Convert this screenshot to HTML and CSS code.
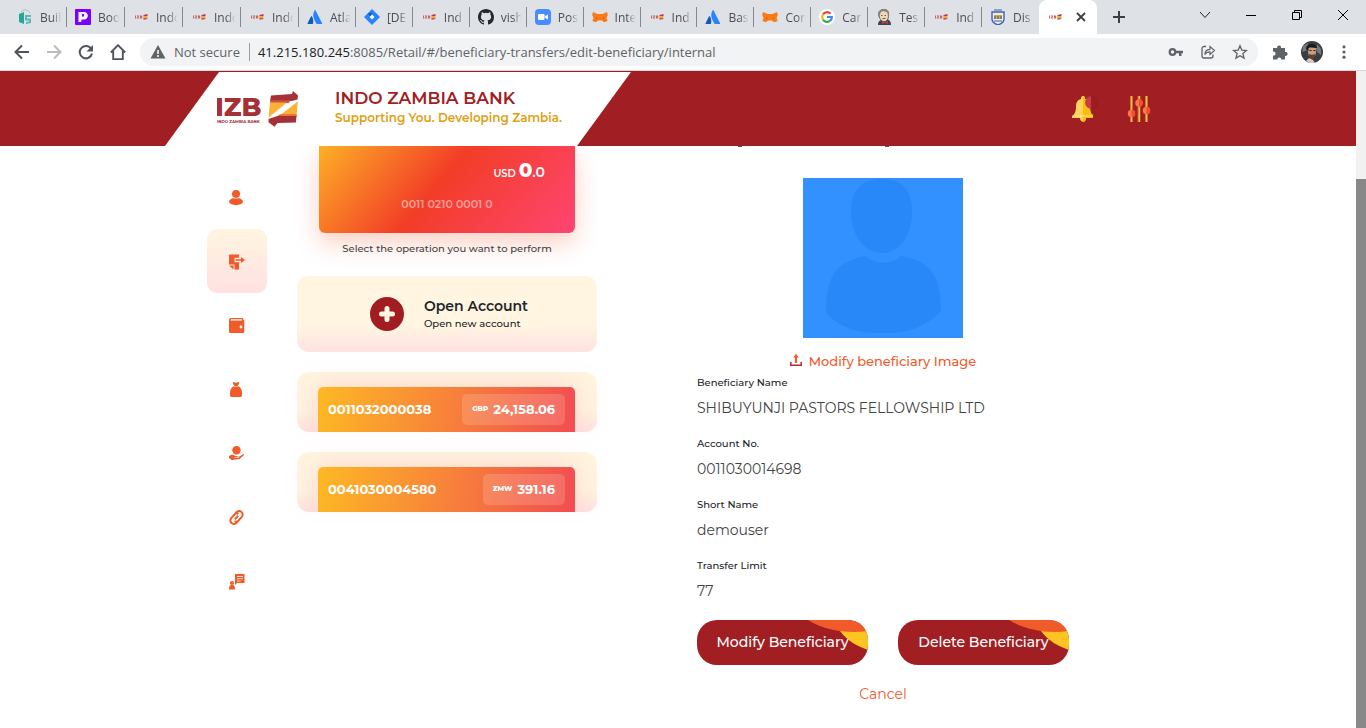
FILE: index.html
```html
<!DOCTYPE html>
<html lang="en">
<head>
<meta charset="utf-8">
<meta name="viewport" content="width=device-width, initial-scale=1">
<title>Indo Zambia Bank</title>
<link rel="stylesheet" href="styles.css">
</head>
<body>
<svg class="defs" aria-hidden="true">
  <symbol id="f-izb" viewBox="0 0 16 16"><path d="M2 6.500h1v3H2zM3.700 6.500h2.600v.8L5 8.700h1.300v.8H3.700v-.8l1.300-1.400H3.700zM7 6.500h1.800l.6.700-.4.800.4.800-.6.700H7z" fill="#c0686a"/><path d="M10.500 6l4-1v2h-4z" fill="#b83a3e"/><path d="M10.300 7h4.200l-.3 2.500h-3.900z" fill="#f7a535"/><path d="M10.300 9.200h4V10l-3.600.8z" fill="#b83a3e"/></symbol>
  <symbol id="f-atl" viewBox="0 0 16 16"><path d="M5 7.500C4.500 7 4.100 7.100 3.900 7.600L.6 14.200c-.2.400 0 .8.500.8h4.700c.8-1.800.7-4.900-.8-7.500z" fill="#1558bc"/><path d="M7.700 1.300c-2 3.200-1.800 6.500-.5 9.200l2.100 4.100c.1.300.3.400.6.400h4.700c.5 0 .7-.4.500-.8L8.600 1.400c-.2-.5-.6-.5-.9-.1z" fill="#2684ff"/></symbol>
  <symbol id="f-fox" viewBox="0 0 16 16"><path d="M1 3l4.500 2h5L15 3l.8 3-1.300 3 1.200 3-3.700 1.300-2-1.800H6l-2 1.800L.3 12l1.200-3L.2 6z" fill="#f97a16"/><path d="M4 8.500l2 1-2 .3zM12 8.500l-2 1 2 .3z" fill="#b5540c"/></symbol>
</svg>
<header class="browser">
  <div class="strip">
    <nav class="tabs" aria-label="Open tabs">
      <a class="tab" href="#"><svg viewBox="0 0 16 16"><path d="M2 5l5-2v12l-5-2z" fill="#26a69a"/><path d="M8 6h6v2h-4v1.500h4V14l-5 1v-2l3-.6v-1H8z" fill="#5bb9af"/><path d="M4 3c2-3 7-3 9 1" fill="none" stroke="#9cc9c4"/></svg><span>Buil</span></a>
      <a class="tab" href="#"><svg viewBox="0 0 16 16"><rect width="16" height="16" rx="1" fill="#7b00ff"/><path d="M3.500 3h5.500c5 0 5 7.500 0 7.500H6.300V13H3.500z" fill="#fff"/><path d="M8 5.200c1-1 2.300.5 0 3-2.300-2.500-1-4 0-3z" fill="#7b00ff"/></svg><span>Boo</span></a>
      <a class="tab" href="#"><svg><use href="#f-izb"/></svg><span>Indo</span></a>
      <a class="tab" href="#"><svg><use href="#f-izb"/></svg><span>Indo</span></a>
      <a class="tab" href="#"><svg><use href="#f-izb"/></svg><span>Indo</span></a>
      <a class="tab" href="#"><svg><use href="#f-atl"/></svg><span>Atla</span></a>
      <a class="tab" href="#"><svg viewBox="0 0 16 16"><path d="M8 0l8 8-8 8-8-8z" fill="#2684ff"/><path d="M8 4v2.500L6 8 4 4z" fill="#1558bc"/><path d="M8 5.500L10.500 8 8 10.500 5.500 8z" fill="#fff"/></svg><span>[DE</span></a>
      <a class="tab" href="#"><svg><use href="#f-izb"/></svg><span>Ind</span></a>
      <a class="tab" href="#"><svg viewBox="0 0 16 16"><path fill="#24292f" d="M8 0C3.580 0 0 3.580 0 8c0 3.540 2.290 6.530 5.470 7.590.4.070.55-.17.55-.38 0-.19-.01-.82-.01-1.490-2.010.37-2.530-.49-2.690-.94-.09-.23-.48-.94-.82-1.130-.28-.15-.68-.52-.01-.53.63-.01 1.080.58 1.230.82.72 1.210 1.870.87 2.330.66.070-.52.28-.87.51-1.070-1.780-.2-3.640-.89-3.640-3.950 0-.87.31-1.590.82-2.150-.08-.2-.36-1.020.08-2.120 0 0 .67-.21 2.200.82a7.600 7.600 0 014 0c1.530-1.040 2.200-.82 2.200-.82.44 1.100.16 1.920.08 2.120.51.56.82 1.270.82 2.150 0 3.070-1.870 3.750-3.650 3.950.29.25.54.73.54 1.480 0 1.070-.01 1.930-.01 2.200 0 .21.15.46.55.38A8.010 8.010 0 0016 8c0-4.420-3.580-8-8-8z"/></svg><span>vish</span></a>
      <a class="tab" href="#"><svg viewBox="0 0 16 16"><rect width="16" height="16" rx="4" fill="#4a8cff"/><rect x="3" y="5" width="6.500" height="6" rx="1.300" fill="#fff"/><path d="M10 7.300L13 5.500v5L10 8.700z" fill="#fff"/></svg><span>Pos</span></a>
      <a class="tab" href="#"><svg><use href="#f-fox"/></svg><span>Inte</span></a>
      <a class="tab" href="#"><svg><use href="#f-izb"/></svg><span>Ind</span></a>
      <a class="tab" href="#"><svg><use href="#f-atl"/></svg><span>Bas</span></a>
      <a class="tab" href="#"><svg><use href="#f-fox"/></svg><span>Con</span></a>
      <a class="tab" href="#"><svg viewBox="0 0 16 16"><circle cx="8" cy="8" r="8" fill="#fff"/><g fill="none" stroke-width="2.200"><path d="M11.500 4.700A4.800 4.800 0 004 5.400" stroke="#ea4335"/><path d="M4 5.400a5 5 0 000 5.200" stroke="#fbbc05"/><path d="M4 10.600a4.800 4.800 0 007.200 1.100" stroke="#34a853"/><path d="M11.200 11.700A4.700 4.700 0 0012.800 8H8" stroke="#4285f4"/></g></svg><span>Car</span></a>
      <a class="tab" href="#"><svg viewBox="0 0 16 16"><path d="M2 16c0-3 1-4 3-5l6-1c2 1 4 2 4 6z" fill="#37474f"/><path d="M3 5c0-6 9-6 9.500-1 .5 5-1 8.500-4 8.500S3 10 3 5z" fill="#f0d6b7" stroke="#4e423b" stroke-width=".8"/><path d="M2.500 8C0 1 7-1.500 11.500 1.500c2.500 2 1.500 5 .7 6.500-.8-2 0-4-1.700-5C8 2 5 2 4.500 4z" fill="#8b817b"/><path d="M6 12l3 1.300L12 12v3l-3-1-3 1z" fill="#d33833"/><path d="M5 6.500h1.500M8.500 6.500H10M6.500 9.500h3" stroke="#4e423b" stroke-width=".8"/></svg><span>Tes</span></a>
      <a class="tab" href="#"><svg><use href="#f-izb"/></svg><span>Ind</span></a>
      <a class="tab" href="#"><svg viewBox="0 0 16 16"><path d="M2 3h12v7c0 3-3 5-6 6-3-1-6-3-6-6z" fill="#e8edf5" stroke="#3f62ae" stroke-width="1.400"/><path d="M4 6h8v4H4z" fill="#d9a62c"/><path d="M4 1h8M5 7v3M8 7v3M11 7v3M4 12h8" stroke="#3f62ae" stroke-width="1.100"/></svg><span>Dis</span></a>
    </nav>
    <div class="tab-active"><svg><use href="#f-izb"/></svg><button class="close" aria-label="Close tab"><svg viewBox="0 0 16 16"><path d="M4 4l8 8M12 4l-8 8" stroke="#3c4043" stroke-width="1.800"/></svg></button></div>
    <button class="newtab" aria-label="New tab"><svg viewBox="0 0 16 16"><path d="M8 2v12M2 8h12" stroke="#3c4043" stroke-width="2"/></svg></button>
    <div class="window">
      <button aria-label="Search tabs"><svg viewBox="0 0 16 16"><path d="M3 5l5 5.500L13 5" fill="none" stroke="#222"/></svg></button>
      <button aria-label="Minimize"><svg viewBox="0 0 16 16"><path d="M3 8.500h10" stroke="#000"/></svg></button>
      <button aria-label="Restore"><svg viewBox="0 0 16 16"><path d="M3.500 5.500h7v7h-7zM5.500 5.500v-2h7v7h-2" fill="none" stroke="#000"/></svg></button>
      <button aria-label="Close"><svg viewBox="0 0 16 16"><path d="M3 3l10 10M13 3L3 13" stroke="#000"/></svg></button>
    </div>
  </div>
  <div class="toolbar">
    <button aria-label="Back"><svg viewBox="0 0 16 16"><path d="M15 8H2M8 1.500L1.500 8 8 14.500" fill="none" stroke="#50555a" stroke-width="2"/></svg></button>
    <button aria-label="Forward"><svg viewBox="0 0 16 16"><path d="M1 8h13M8 1.500L14.500 8 8 14.500" fill="none" stroke="#babcbe" stroke-width="2"/></svg></button>
    <button aria-label="Reload"><svg viewBox="0 0 16 16"><path d="M13.300 5A6.200 6.200 0 1014 9.500" fill="none" stroke="#50555a" stroke-width="2"/><path d="M15 1v6.500H8.500z" fill="#50555a"/></svg></button>
    <button aria-label="Home"><svg viewBox="0 0 16 16"><path d="M.8 8.500L8 1.200l7.200 7.300M3.200 7v8.200h9.600V7" fill="none" stroke="#50555a" stroke-width="1.900"/></svg></button>
    <div class="address">
      <svg viewBox="0 0 16 16"><path d="M8 1l7.500 13.500H.5z" fill="#5f6368"/><path d="M8 6v4M8 11v2" stroke="#fff" stroke-width="1.500"/></svg>
      <span class="secure">Not secure</span>
      <span class="url"><b>41.215.180.245</b>:8085/Retail/#/beneficiary-transfers/edit-beneficiary/internal</span>
      <span class="page-actions">
      <svg viewBox="0 0 16 16"><circle cx="4.500" cy="8" r="2.800" fill="none" stroke="#5f6368" stroke-width="2.200"/><path d="M7 6.800h8v2.500h-1.500V12h-2.500V9.300H7z" fill="#5f6368"/></svg>
      <svg viewBox="0 0 16 16"><path d="M6 2.500H4a2 2 0 00-2 2V12a2 2 0 002 2h7a2 2 0 002-2v-1.500" fill="none" stroke="#5f6368" stroke-width="1.300"/><path d="M4.800 10.500C5 7 7 5.500 10 5.300V2.500l4.500 4-4.500 4V7.800c-2.500 0-4 .7-5.200 2.700z" fill="none" stroke="#5f6368" stroke-width="1.200"/></svg>
      <svg viewBox="0 0 16 16"><path d="M8 1.800l1.800 4.300 4.600.4-3.500 3 1.100 4.600L8 11.700l-4 2.400 1.100-4.600-3.500-3 4.600-.4z" fill="none" stroke="#5f6368" stroke-width="1.300"/></svg>
      </span>
    </div>
    <button aria-label="Extensions"><svg viewBox="0 0 16 16"><path d="M1 4h4.200a2 2 0 113.800 0H13v4a2 2 0 110 3.800V15.500H9.300a2 2 0 10-4 0H1v-4a2 2 0 100-3.800z" fill="#5f6368"/></svg></button>
    <button class="profile" aria-label="Profile"><svg viewBox="0 0 22 22"><circle cx="11" cy="11" r="11" fill="#3b3d40"/><path d="M2 5l5-3v7L1 11zM16 3l4 5v6l-4-3z" fill="#727983"/><path d="M6.500 6.500c2-3 8-2 9 1l-1 7-3.500 3-3.500-3z" fill="#c99c7d"/><path d="M5 8c0-6 10-7 11-1-3 0-6-1-8.500 0v3z" fill="#19191b"/><path d="M7.500 13c2 1 5 1 7 0 0 3-2 4.500-3.500 4.500S7.500 16 7.500 13z" fill="#5c4335"/><path d="M8.500 9.500h2M12.500 9.500h2" stroke="#222"/><path d="M5 20l3-3 4 2 2 3H9z" fill="#d5c9bf"/></svg></button>
    <button class="menu" aria-label="Menu"><svg viewBox="0 0 16 16" fill="#5f6368"><circle cx="8" cy="2.800" r="1.600"/><circle cx="8" cy="8" r="1.600"/><circle cx="8" cy="13.200" r="1.600"/></svg></button>
  </div>
</header>

<div class="viewport">
<div class="page">
  <header class="bank">
    <div class="brand">
      <svg class="logo" viewBox="0 0 82 38" role="img" aria-label="IZB Indo Zambia Bank">
        <text class="logo-name" x="-2" y="26">IZB</text><text class="logo-sub" x="0" y="33">INDO ZAMBIA BANK</text>
        <path d="M54 5.500L75 4l1-3 5 4.500-.5 4L75 11H53z" fill="#a53035"/><path d="M53.500 10.200H74l-2.500 2.800H53z" fill="#cf4f45"/><path d="M53 12.500h17L51.500 27.500z" fill="#fcb034"/><path d="M80.800 11.500L79.500 26H62z" fill="#fcb034"/><path d="M63 24.300h16.600V27H59z" fill="#ef6a3b"/><path d="M51.500 29l9-3h19l-.6 6.500-18.400.5-3 3.700-6-4.500z" fill="#a53035"/>
      </svg>
      <div><h1>INDO ZAMBIA BANK</h1><p>Supporting You. Developing Zambia.</p></div>
    </div>
    <div class="tools">
      <button aria-label="Notifications"><svg viewBox="0 0 26 26"><path d="M11 0c1.500 0 2 1 2 3 4 1 5 4 5 8 0 5 1 7 3 8v3h-7c0 5-6 5-6 0H0v-2c2-1 4-4 4-9 0-4 1-7 5-8 0-2 .5-3 2-3z" fill="#ffd45c"/><path d="M11 0c1.500 0 2 1 2 3 4 1 5 4 5 8 0 5 1 7 3 8v3h-7c0 2-1 4-3 4z" fill="#fdbd10"/><path d="M1 20h20" stroke="#ffe58a"/><path d="M19.500 0a6.500 6.500 0 000 13z" fill="#ca3b45"/><path d="M19.500 0a6.500 6.500 0 010 13z" fill="#9c1c23" stroke="#8c1a22" stroke-width=".5"/></svg></button>
      <button aria-label="Settings"><svg viewBox="0 0 26 26"><path d="M5.500 0v26M13 0v26M20.500 0v26" stroke="#d98d34" stroke-width="2.600"/><path d="M5.500 0v26M13.500 0v26M20.500 0v26" stroke="#ffc34a"/><circle cx="5.500" cy="17.500" r="3.700" fill="#ff7552"/><circle cx="13" cy="7" r="3.700" fill="#ff7552"/><circle cx="20.500" cy="14.500" r="3.700" fill="#ff7552"/><path d="M5.500 13.800a3.700 3.700 0 010 7.400zM13 3.300a3.700 3.700 0 010 7.400zM20.500 10.800a3.700 3.700 0 010 7.400z" fill="#ef5029"/></svg></button>
    </div>
  </header>

  <main class="content">
    <nav class="side" aria-label="Main">
      <a href="#" aria-label="Profile"><svg viewBox="0 0 16 16"><circle cx="7" cy="4" r="4"/><ellipse cx="7" cy="11.500" rx="7" ry="3.700"/><path d="M3 6.500c1 2.500 7 2.500 8 0" fill="none" stroke="#fff" stroke-width=".7"/></svg></a>
      <a class="current" href="#" aria-label="Transfers"><svg viewBox="0 0 16 16"><path d="M0 1.500C0 .7.700.500 1.500.500H10v3.200H5.500v4.600H10V15.500H5.500V10.500H0z"/><path d="M6.500 5.200H12V3l4 3-4 3V6.800H6.500z"/><path d="M0 11.500h4.500V15.500z"/></svg></a>
      <a href="#" aria-label="Wallet"><svg viewBox="0 0 16 16"><path d="M2 0h11c1 0 1.500.8 1.500 1.600V2c.6 0 .8.400.8 1v10.500c0 .9-.6 1.500-1.500 1.500H1.500C.6 15 0 14.400 0 13.500V2C0 .8.800 0 2 0z"/><path d="M2 1h11v1.700H1.500z" fill="#ffd5c4"/><circle cx="12" cy="9" r="1.400" fill="#fff"/></svg></a>
      <a href="#" aria-label="Savings"><svg viewBox="0 0 16 16"><path d="M4 0l3 .7L10 0v2L8.500 4h-3L4 2z"/><path d="M4 4.500h6C12 6 13 8 13 11v2c0 1.500-.7 2-2 2H3c-1.300 0-2-.5-2-2v-2c0-3 1-5 3-6.500z"/></svg></a>
      <a href="#" aria-label="Loans"><svg viewBox="0 0 16 16"><circle cx="7.500" cy="4.200" r="4.200"/><path d="M0 10.500c1.500-2 3.500-2.200 6-.8l4 1 4.500-2.700c.8 0 .8.700.3 1.200L10.500 13l-6 .8-1.500.5L0 12z"/><path d="M5.500 11.500h4.500" stroke="#fff" stroke-width=".7"/></svg></a>
      <a href="#" aria-label="Links"><svg viewBox="0 0 16 16" class="line"><g transform="rotate(-48 7.500 7.500)"><path d="M6.500 11H3.500a3.500 3.500 0 010-7h5a3 3 0 013 2.500M8.500 4h3a3.500 3.500 0 010 7h-5a3 3 0 01-3-2.500M5 7.500h5"/></g></svg></a>
      <a href="#" aria-label="Support"><svg viewBox="0 0 16 16"><path d="M6 0h9.500v9H8l-2 2zM0 15.500c0-3.500 1-4.500 3-4.500s3 1 3 4.500z"/><circle cx="3" cy="9" r="2"/><path d="M8 2.500h6M8 4.700h6M8 7h3.500" stroke="#fff" stroke-width=".8"/></svg></a>
    </nav>

    <section class="accounts">
      <div class="card"><p class="balance">USD <strong>0</strong><span>.0</span></p><p class="number">0011 0210 0001 0</p></div>
      <p class="hint">Select the operation you want to perform</p>
      <a class="panel open" href="#"><svg viewBox="0 0 34 34"><circle cx="17" cy="17" r="17" fill="#a11d22"/><path d="M17 11.500v11M11.500 17h11" stroke="#fff5e1" stroke-width="5" stroke-linecap="round"/></svg><span><strong>Open Account</strong><small>Open new account</small></span></a>
      <a class="panel account" href="#"><span class="row"><b>0011032000038</b><span class="amount"><small>GBP</small>24,158.06</span></span></a>
      <a class="panel account" href="#"><span class="row"><b>0041030004580</b><span class="amount"><small>ZMW</small>391.16</span></span></a>
    </section>

    <section class="beneficiary">
      <svg class="tails" viewBox="0 0 372 2" aria-hidden="true"><path d="M41 0h4v1h-4zM188 0h4v1h-4z" fill="#555"/></svg>
      <svg class="avatar" viewBox="0 0 160 160" role="img" aria-label="Beneficiary"><rect width="160" height="160" fill="#3391ff"/><g fill="#2988f7"><path d="M79 1c17 0 30 8 30 33 0 23-12 41-30 41S48 57 48 34C48 9 61 1 79 1z"/><path d="M63 78c9 9 26 9 35 0 27 5 40 16 40 55-16 16-30 22-58 22s-42-5-57-20c0-40 12-52 40-57z"/></g></svg>
      <button class="upload"><svg viewBox="0 0 12 12"><path d="M6 0l3 3.500H7V9H5V3.500H3z" fill="#f15a29"/><path d="M.800 8v3.200h10.400V8" fill="none" stroke="#b02a30" stroke-width="1.500"/></svg>Modify beneficiary Image</button>
      <dl>
        <div><dt>Beneficiary Name</dt><dd>SHIBUYUNJI PASTORS FELLOWSHIP LTD</dd></div>
        <div><dt>Account No.</dt><dd>0011030014698</dd></div>
        <div><dt>Short Name</dt><dd>demouser</dd></div>
        <div><dt>Transfer Limit</dt><dd>77</dd></div>
      </dl>
      <div class="actions">
        <button><svg viewBox="0 0 60 30"><path d="M32 11C40 22 50 26 60 30V8z" fill="#fec421"/><path d="M0 0c16 10 38 14 60 11V0z" fill="#f15a29"/></svg><span>Modify Beneficiary</span></button>
        <button><svg viewBox="0 0 60 30"><path d="M32 11C40 22 50 26 60 30V8z" fill="#fec421"/><path d="M0 0c16 10 38 14 60 11V0z" fill="#f15a29"/></svg><span>Delete Beneficiary</span></button>
      </div>
      <button class="cancel">Cancel</button>
    </section>
  </main>
</div>
<div class="scrollbar" aria-hidden="true"><div></div></div>
</div>
</body>
</html>
```

FILE: styles.css
```css
* { box-sizing: border-box; }
body { margin: 0; height: 100vh; display: flex; flex-direction: column; overflow: hidden; background: #fff; color: #212529; font-family: Montserrat, Inter, sans-serif; font-size: 14px; }
button { border: 0; padding: 0; background: none; font: inherit; color: inherit; cursor: pointer; }
a { color: inherit; text-decoration: none; }
h1, p, dl, dd { margin: 0; }
svg { display: block; flex: none; }
.defs { position: absolute; width: 0; height: 0; }

/* browser frame */
.browser { flex: none; border-bottom: 1px solid #d5d6d8; font-family: "Segoe UI", "Open Sans", sans-serif; }
.strip { display: flex; height: 34px; padding-left: 9px; background: #dee1e6; }
.strip svg { width: 16px; height: 16px; }
.tabs { flex: 1; display: flex; min-width: 0; align-items: center; }
.tab { flex: 1 1 0; min-width: 0; height: 20px; display: flex; align-items: center; gap: 7px; padding: 0 2px 0 8px; border-right: 1px solid #85888d; overflow: hidden; }
.tab:nth-child(-n+5) { min-width: 58px; }
.tab:last-child { border-color: transparent; }
.tab span { flex: 1; min-width: 0; overflow: hidden; white-space: nowrap; font-size: 12px; color: #4a4d51; -webkit-mask-image: linear-gradient(90deg, #000 50%, transparent 90%); mask-image: linear-gradient(90deg, #000 50%, transparent 90%); }
.tab-active { width: 58px; display: flex; align-items: center; justify-content: space-between; padding: 0 8px; background: #fff; border-radius: 8px 8px 0 0; }
.newtab { width: 44px; display: grid; place-items: center; }
.window { display: flex; margin-left: 41px; }
.window button { width: 46px; height: 29px; display: grid; place-items: center; }
.toolbar { display: flex; align-items: center; height: 36px; padding: 0 6px; background: #fff; }
.toolbar button { width: 32px; height: 32px; display: grid; place-items: center; }
.toolbar svg { width: 16px; height: 16px; }
.address { flex: 1; display: flex; align-items: center; height: 28px; margin: 0 6px; padding: 0 10px; gap: 8px; background: #f1f3f4; border-radius: 14px; color: #5f6368; font-size: 13px; }
.secure { padding-right: 9px; border-right: 1px solid #9a9da1; }
.url { flex: 1; white-space: nowrap; }
.url b { color: #202124; font-weight: 400; }
.page-actions { display: flex; gap: 16px; }
.toolbar .profile svg { width: 22px; height: 22px; }

/* scrolled page */
.viewport { flex: 1; min-height: 0; display: flex; }
.page { flex: 1; min-width: 0; overflow: hidden; }
.bank { position: relative; z-index: 1; display: flex; justify-content: space-between; height: 75px; background: #a11f23; border-top: 1px solid #a11f23; }
.brand { width: 466px; margin-left: 165px; padding-left: 52px; display: flex; align-items: center; gap: 36px; background: #fff; clip-path: polygon(54px 0, 100% 0, calc(100% - 54px) 100%, 0 100%); }
.logo { width: 82px; height: 38px; }
.logo-name { font: 800 26px Montserrat, sans-serif; fill: #a53035; }
.logo-sub { font: 700 4px Montserrat, sans-serif; fill: #a53035; }
.brand h1 { font-size: 17px; line-height: 20px; font-weight: 600; color: #a11f23; }
.brand p { padding-bottom: 2px; font-size: 12px; line-height: 20px; font-weight: 600; color: #e0a010; }
.tools { display: flex; align-items: center; gap: 28px; margin-right: 204px; }
.tools svg { width: 26px; height: 26px; }
.content { display: flex; width: 100%; max-width: 942px; margin: 0 auto; }
.side { flex: none; width: 60px; padding-top: 19px; }
.side a { display: grid; place-items: center; height: 64px; border-radius: 10px; }
.side .current { background: linear-gradient(#fff5e1, #ffe1e1); }
.side svg { width: 16px; height: 16px; margin-top: 2px; fill: #f15a29; }
.side .line { fill: none; stroke: #f15a29; stroke-width: 2; overflow: visible; }
.accounts { flex: none; width: 300px; margin-left: 30px; }
.card { margin: 0 22px; height: 87px; padding: 12px 30px 0 0; border-radius: 0 0 6px 6px; background: linear-gradient(130deg, #fdb026, #f23d27 46%, #ff4572); box-shadow: 0 10px 24px #f15a2948; color: #fff; }
.balance { text-align: right; font-size: 10px; line-height: 24px; font-weight: 600; }
.balance strong { font-size: 20px; font-weight: 800; }
.balance span { font-size: 14px; }
.number { padding: 10px 0 0 30px; text-align: center; font-size: 11px; line-height: 16px; font-weight: 600; color: #ffffff80; }
.hint { padding: 8px 0 19px; text-align: center; font-size: 10px; line-height: 16px; font-weight: 500; color: #444; }
.panel { display: flex; margin-bottom: 20px; border-radius: 12px; background: linear-gradient(#fff5e1 65%, #ffe1e1); }
.open { height: 76px; align-items: center; justify-content: center; gap: 20px; padding-left: 4px; }
.open svg { width: 34px; height: 34px; }
.open strong, .open small { display: block; }
.open strong { font-size: 14px; line-height: 20px; font-weight: 600; }
.open small { font-size: 10px; line-height: 16px; font-weight: 500; }
.account { height: 60px; padding: 15px 22px 0 21px; overflow: hidden; box-shadow: 0 0 20px #f04b5508; }
.row { flex: 1; display: flex; align-items: center; justify-content: space-between; padding: 0 10px; border-radius: 5px 5px 0 0; background: linear-gradient(100deg, #fdb924, #f24c50); box-shadow: 0 0 30px #f04b5530; color: #fff; font-size: 13px; line-height: 16px; font-weight: 700; }
.row b { padding-bottom: 1px; font-weight: 700; }
.amount { display: flex; align-items: center; gap: 5px; height: 31px; padding: 0 10px 1px; border-radius: 5px; background: #ffffff28; }
.amount small { font-size: 7px; font-weight: 800; }
.beneficiary { width: 372px; margin-left: 100px; display: flex; flex-direction: column; }
.tails { width: 100%; height: 2px; }
.avatar { align-self: center; width: 160px; height: 160px; margin-top: 30px; }
.upload { align-self: center; display: flex; align-items: center; gap: 7px; margin-top: 14px; font-size: 13px; line-height: 18px; font-weight: 500; color: #f15a29; }
.upload svg { width: 12px; height: 12px; margin-bottom: 3px; }
dl > div { height: 61px; padding-top: 5px; }
dt { font-size: 10px; line-height: 16px; font-weight: 500; }
dd { margin-top: 7px; font-size: 14px; line-height: 20px; color: #444; }
.actions { display: flex; gap: 30px; margin-top: 6px; }
.actions button { position: relative; flex: 1; height: 45px; padding-bottom: 2px; border-radius: 20px; background: #a11f23; color: #fff; font-weight: 500; overflow: hidden; }
.actions svg { position: absolute; top: 0; right: 0; width: 60px; height: 30px; }
.actions span { position: relative; }
.cancel { align-self: center; margin-top: 19px; line-height: 20px; color: #f15a29; }
.scrollbar { width: 10px; padding-top: 108px; background: #f1f1f1; }
.scrollbar div { height: 100%; background: #888; }
```
